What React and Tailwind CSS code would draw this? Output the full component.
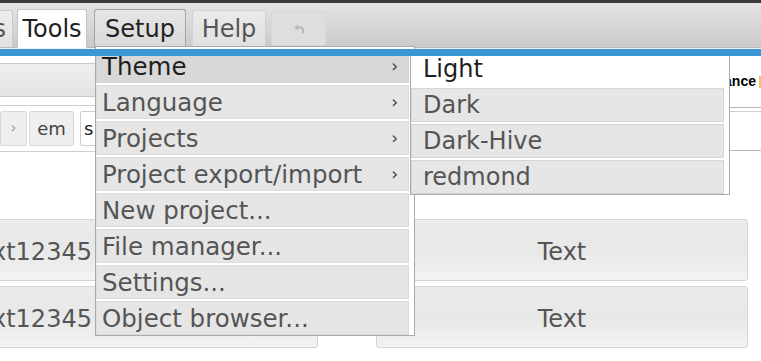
import { useState } from 'react'

const setupItems = [
  { label: 'Theme', sub: true, active: true },
  { label: 'Language', sub: true },
  { label: 'Projects', sub: true },
  { label: 'Project export/import', sub: true },
  { label: 'New project...' },
  { label: 'File manager...' },
  { label: 'Settings...' },
  { label: 'Object browser...' },
]

const themes = ['Light', 'Dark', 'Dark-Hive', 'redmond']

function UndoIcon() {
  return (
    <svg width="12" height="12" viewBox="0 0 12 12" fill="none">
      <path d="M1 4.5 5 1.5v6z" fill="#b9b9b9" />
      <path d="M4.5 4.5h2.5a3 3 0 0 1 3 3v3" stroke="#b9b9b9" strokeWidth="2" />
    </svg>
  )
}

export default function App() {
  const [theme] = useState('Light')

  return (
    <div className="relative w-[761px] h-[361px] overflow-hidden bg-white font-['DejaVu_Sans',sans-serif]">
      {/* top strip */}
      <div className="h-[3px] bg-[#3b3b3b]" />

      {/* Menubar */}
      <div className="h-[45px] flex items-end bg-gradient-to-b from-[#e4e4e4] to-[#cbcbcb] border-b border-[#b9b9b9]">
        <div className="-ml-[20px] w-[33px] h-[37px] flex items-center justify-end pr-[6px] rounded-t-[3px] border border-b-0 border-[#c9c9c9] bg-gradient-to-b from-[#ededed] to-[#e2e2e2] text-[24px] text-[#555]">
          s
        </div>
        <div className="ml-[4px] w-[70px] h-[39px] -mb-px relative z-10 flex items-center justify-center rounded-t-[3px] border border-b-0 border-[#c5c5c5] bg-white text-[24px] text-[#222]">
          Tools
        </div>
        <div className="ml-[7px] w-[92px] h-[38px] flex items-center justify-center rounded-t-[3px] border border-b-0 border-[#a3a3a3] bg-gradient-to-b from-[#e6e6e6] to-[#d9d9d9] text-[24px] text-[#222]">
          Setup
        </div>
        <div className="ml-[6px] w-[74px] h-[37px] flex items-center justify-center rounded-t-[3px] border border-b-0 border-[#d2d2d2] bg-gradient-to-b from-[#ebebeb] to-[#e0e0e0] text-[24px] text-[#555]">
          Help
        </div>
        <div className="ml-[5px] mb-px w-[55px] h-[35px] flex items-center justify-center rounded-[3px] border border-[#d7d7d7] bg-[#dedede]">
          <UndoIcon />
        </div>
      </div>
      <div className="h-px bg-[#f4f4f4]" />
      <div className="relative z-30 h-[7px] bg-[#3a97d3]" />

      {/* Workspace */}
      <div className="flex">
        <div className="w-[640px]">
          <div className="h-[7px]" />
          <div className="h-[34px] border-y border-[#cacaca] bg-gradient-to-b from-[#efefef] to-[#e3e3e3]" />
          <div className="h-[8px]" />
          <div className="h-[47px] border-y border-[#cfcfcf] flex items-center">
            <div className="w-[27px] h-[35px] flex items-center justify-center rounded-[2px] border border-[#d8d8d8] bg-[#efefef] text-[15px] text-[#9a9a9a]">
              ›
            </div>
            <div className="ml-[2px] w-[45px] h-[35px] flex items-center justify-center rounded-[2px] border border-[#d8d8d8] bg-[#efefef] text-[18px] text-[#444]">
              em
            </div>
            <div className="ml-[6px] w-[120px] h-[35px] flex items-center pl-[3px] rounded-[2px] border border-[#cdcdcd] bg-white text-[18px] text-[#222]">
              s
            </div>
          </div>
        </div>
        <div className="flex-1 overflow-hidden">
          <div className="h-[51px] flex items-center justify-end font-['Liberation_Sans',sans-serif] text-[14px] font-bold text-black">
            <span>Appearance</span>
            <span className="ml-[3px] -mr-[12px] w-[14px] h-[12px] bg-[#f3c466]" />
          </div>
          <div className="h-px bg-[#b3b3b3]" />
          <div className="h-[3px]" />
          <div className="h-[40px] border-t border-[#cdcdcd] border-b border-b-[#b8b8b8]" />
        </div>
      </div>

      {/* Buttons */}
      <div className="mt-[67px] flex flex-col gap-[5px]">
        {[0, 1].map((i) => (
          <div key={i} className="flex">
            <div className="-ml-[259px] w-[577px] h-[62px] flex items-center justify-center pt-[3px] rounded-[3px] border border-[#d4d4d4] bg-gradient-to-b from-[#ebebeb] via-[#e8e8e8] to-[#f3f3f3] text-[24px] text-[#555]">
              Text12345
            </div>
            <div className="ml-[58px] w-[372px] h-[62px] flex items-center justify-center pt-[3px] rounded-[3px] border border-[#d4d4d4] bg-gradient-to-b from-[#ebebeb] via-[#e8e8e8] to-[#f3f3f3] text-[24px] text-[#555]">
              Text
            </div>
          </div>
        ))}
      </div>

      {/* Setup dropdown */}
      <div className="absolute z-20 left-[95px] top-[46px] w-[320px] bg-white border border-[#a9a9a9] pt-[2px] pr-[5px] flex flex-col gap-[2px]">
        {setupItems.map((it) => (
          <div
            key={it.label}
            className={`h-[34px] flex items-center justify-between pl-[5px] pr-[10px] pt-[2px] border ${
              it.active ? 'bg-[#d8d8d8] border-[#d0d0d0] text-[#1e1e1e]' : 'bg-[#e6e6e6] border-[#dcdcdc] text-[#555]'
            } text-[24.5px]`}
          >
            <span>{it.label}</span>
            {it.sub && <span className="text-[17px] text-[#444]">›</span>}
          </div>
        ))}
      </div>

      {/* Theme submenu */}
      <div className="absolute z-20 left-[410px] top-[50px] w-[320px] bg-white border border-[#a9a9a9] pt-px pr-[5px] flex flex-col gap-[2px]">
        {themes.map((t) => (
          <div
            key={t}
            className={`h-[34px] flex items-center pl-[11px] border text-[24px] ${
              t === theme ? 'bg-white border-white text-[#1e1e1e]' : 'bg-[#e6e6e6] border-[#d6d6d6] text-[#555]'
            }`}
          >
            {t}
          </div>
        ))}
      </div>
    </div>
  )
}
